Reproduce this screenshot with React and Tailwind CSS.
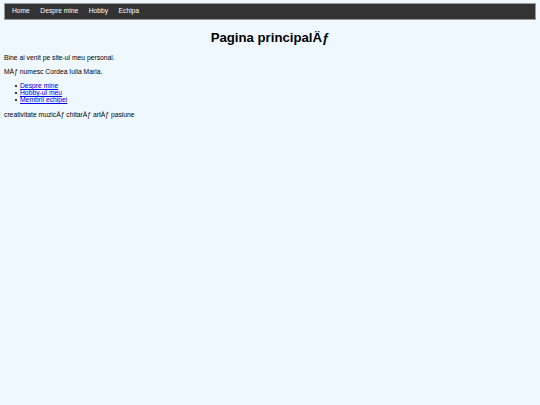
export default function App() {
  const links = ['Home', 'Despre mine', 'Hobby', 'Echipa'];
  const items = ['Despre mine', 'Hobby-ul meu', 'Membrii echipei'];

  return (
    <div className="min-h-[405px] bg-[#f0f8ff] px-[4px] pt-[3px] text-black" style={{ fontFamily: '"Liberation Sans", Arial, sans-serif' }}>
      {/* Navigatie */}
      <nav className="flex h-[17px] items-center gap-[10.5px] border border-[#9a9a9a] bg-[#333333] px-[7px] text-[6.7px] font-normal text-white">
        {links.map(l => (
          <a key={l} href="#" className="text-white no-underline">{l}</a>
        ))}
      </nav>

      <h1 className="mt-[9.5px] text-center text-[13.2px] font-bold leading-[15px]">Pagina principalÄƒ</h1>

      <p className="mt-[8.5px] text-[6.75px] leading-[9px]">Bine ai venit pe site-ul meu personal.</p>
      <p className="mt-[5px] text-[6.75px] leading-[9px]">MÄƒ numesc Cordea Iulia Maria.</p>

      <ul className="mt-[6px] pl-[11px] text-[6.75px] leading-[7px]">
        {items.map(t => (
          <li key={t} className="flex items-center">
            <span className="mr-[3px] h-[2px] w-[2px] rounded-full bg-black" />
            <a href="#" className="text-[#0000ee] underline">{t}</a>
          </li>
        ))}
      </ul>

      <p className="mt-[7px] text-[6.75px] leading-[9px]">creativitate muzicÄƒ chitarÄƒ artÄƒ pasiune</p>
    </div>
  );
}
